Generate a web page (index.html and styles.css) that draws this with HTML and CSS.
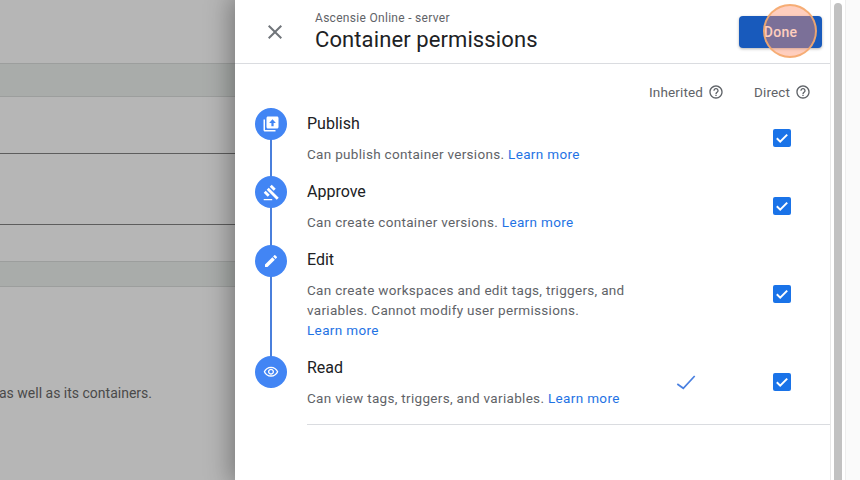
FILE: index.html
```html
<!DOCTYPE html>
<html lang="en">
<head>
<meta charset="utf-8">
<title>Container permissions</title>
<link rel="stylesheet" href="styles.css">
</head>
<body>
<div class="backdrop">
  <div class="bg-row r1"></div>
  <div class="bg-row band r2"></div>
  <div class="bg-row r3"></div>
  <div class="bg-row r4"></div>
  <div class="bg-row r5"></div>
  <div class="bg-row band r6"></div>
  <div class="bg-row r7"><span class="bg-text">as well as its containers.</span></div>
</div>
<section class="panel">
  <div class="main">
    <header class="head">
      <button class="close" aria-label="Close">
        <svg width="24" height="24" viewBox="0 0 24 24"><path d="M19 6.41 17.59 5 12 10.59 6.41 5 5 6.41 10.59 12 5 17.59 6.41 19 12 13.41 17.59 19 19 17.59 13.41 12z" fill="#70757a"/></svg>
      </button>
      <div class="titles">
        <div class="sub">Ascensie Online - server</div>
        <h1 class="title">Container permissions</h1>
      </div>
      <button class="done">Done</button>
    </header>
    <div class="cols">
      <span class="col col-i">Inherited
        <svg class="help" viewBox="0 0 24 24"><path fill="#5f6368" d="M11 18h2v-2h-2v2zm1-16C6.48 2 2 6.48 2 12s4.48 10 10 10 10-4.48 10-10S17.52 2 12 2zm0 18c-4.41 0-8-3.59-8-8s3.59-8 8-8 8 3.59 8 8-3.59 8-8 8zm0-14c-2.21 0-4 1.79-4 4h2c0-1.1.9-2 2-2s2 .9 2 2c0 2-3 1.75-3 5h2c0-2.25 3-2.5 3-5 0-2.21-1.79-4-4-4z"/></svg>
      </span>
      <span class="col col-d">Direct
        <svg class="help" viewBox="0 0 24 24"><path fill="#5f6368" d="M11 18h2v-2h-2v2zm1-16C6.48 2 2 6.48 2 12s4.48 10 10 10 10-4.48 10-10S17.52 2 12 2zm0 18c-4.41 0-8-3.59-8-8s3.59-8 8-8 8 3.59 8 8-3.59 8-8 8zm0-14c-2.21 0-4 1.79-4 4h2c0-1.1.9-2 2-2s2 .9 2 2c0 2-3 1.75-3 5h2c0-2.25 3-2.5 3-5 0-2.21-1.79-4-4-4z"/></svg>
      </span>
    </div>
    <div class="perm p-publish">
      <div class="rail"><span class="dot"><svg width="18" height="18" viewBox="0 0 24 24"><path fill="#fff" d="M4 6H2v14c0 1.1.9 2 2 2h14v-2H4V6zm16-4H8c-1.100 0-2 .9-2 2v12c0 1.100.9 2 2 2h12c1.100 0 2-.9 2-2V4c0-1.100-.9-2-2-2zm-4.500 13h-3v-4.500H9.500L14 5.500l4.500 5h-3z"/></svg></span></div>
      <div class="txt"><div class="name">Publish</div><p class="desc">Can publish container versions. <a class="lnk">Learn more</a></p></div>
      <div class="inh"></div>
      <div class="chk"><svg width="18" height="18" viewBox="0 0 18 18"><rect width="18" height="18" rx="2" fill="#1a73e8"/><path d="M3.800 9.300l3.400 3.300 7-7" fill="none" stroke="#fff" stroke-width="2"/></svg></div>
    </div>
    <div class="perm p-approve">
      <div class="rail"><span class="dot"><svg width="17" height="17" viewBox="0 0 24 24"><path fill="#fff" d="M1 21h12v2H1v-2zM5.245 8.070l2.830-2.827 14.140 14.142-2.828 2.828L5.245 8.070zM12.317 1l5.657 5.656-2.830 2.830-5.654-5.660L12.317 1zM3.825 9.485l5.657 5.657-2.828 2.828-5.657-5.657 2.828-2.828z"/></svg></span></div>
      <div class="txt"><div class="name">Approve</div><p class="desc">Can create container versions. <a class="lnk">Learn more</a></p></div>
      <div class="inh"></div>
      <div class="chk"><svg width="18" height="18" viewBox="0 0 18 18"><rect width="18" height="18" rx="2" fill="#1a73e8"/><path d="M3.800 9.300l3.400 3.300 7-7" fill="none" stroke="#fff" stroke-width="2"/></svg></div>
    </div>
    <div class="perm p-edit">
      <div class="rail"><span class="dot"><svg width="16" height="16" viewBox="0 0 24 24"><path fill="#fff" d="M3 17.250V21h3.750L17.810 9.940l-3.750-3.750L3 17.250zM20.710 7.040a1 1 0 0 0 0-1.410l-2.340-2.340a1 1 0 0 0-1.410 0l-1.830 1.830 3.750 3.750 1.830-1.830z"/></svg></span></div>
      <div class="txt"><div class="name">Edit</div><p class="desc wide">Can create workspaces and edit tags, triggers, and variables. Cannot modify user permissions. <a class="lnk">Learn more</a></p></div>
      <div class="inh"></div>
      <div class="chk"><svg width="18" height="18" viewBox="0 0 18 18"><rect width="18" height="18" rx="2" fill="#1a73e8"/><path d="M3.800 9.300l3.400 3.300 7-7" fill="none" stroke="#fff" stroke-width="2"/></svg></div>
    </div>
    <div class="perm p-read">
      <div class="rail"><span class="dot"><svg width="16" height="16" viewBox="0 0 24 24"><path fill="#fff" d="M12 6c3.790 0 7.170 2.130 8.820 5.500C19.170 14.870 15.790 17 12 17s-7.170-2.130-8.820-5.500C4.830 8.130 8.210 6 12 6m0-2C7 4 2.730 7.110 1 11.500 2.730 15.890 7 19 12 19s9.270-3.110 11-7.500C21.270 7.110 17 4 12 4zm0 5c1.380 0 2.500 1.120 2.500 2.500S13.380 14 12 14s-2.500-1.120-2.500-2.500S10.620 9 12 9m0-2c-2.480 0-4.500 2.020-4.500 4.500S9.520 16 12 16s4.500-2.020 4.500-4.500S14.480 7 12 7z"/></svg></span></div>
      <div class="txt"><div class="name">Read</div><p class="desc">Can view tags, triggers, and variables. <a class="lnk">Learn more</a></p></div>
      <div class="inh"><svg width="22" height="20" viewBox="0 0 22 20"><path d="M2.300 12l6 4.300L19.700 4" fill="none" stroke="#4a80e0" stroke-width="1.700"/></svg></div>
      <div class="chk"><svg width="18" height="18" viewBox="0 0 18 18"><rect width="18" height="18" rx="2" fill="#1a73e8"/><path d="M3.800 9.300l3.400 3.300 7-7" fill="none" stroke="#fff" stroke-width="2"/></svg></div>
    </div>
    <div class="rule"></div>
  </div>
  <div class="scroll"><div class="thumb"></div></div>
  <div class="edge"></div>
</section>
<div class="spot"></div>
</body>
</html>
```

FILE: styles.css
```css
* { box-sizing: border-box; }
html, body { margin: 0; height: 100%; }
body {
  width: 860px; height: 480px; overflow: hidden; display: flex;
  font-family: Roboto, "Liberation Sans", sans-serif; background: #fff; position: relative;
}
.backdrop { width: 235px; flex: none; display: flex; flex-direction: column; background: #b6b6b6; }
.bg-row { flex: none; border-bottom: 1px solid #9c9e9d; }
.band { background: #a9acaa; }
.r1 { height: 64px; }
.r2 { height: 33px; }
.r3 { height: 57px; border-bottom: 1px solid #5d5d5d; }
.r4 { height: 71px; border-bottom: 1px solid #5d5d5d; }
.r5 { height: 37px; }
.r6 { height: 25px; }
.r7 { flex: 1; border: 0; padding-top: 98px; }
.bg-text { display: block; margin-left: -1px; font-size: 14px; line-height: 16px; color: #4a4a4a; white-space: nowrap; }
.panel {
  flex: 1; display: flex; background: #fff; position: relative;
  box-shadow: 0 0 24px 4px rgba(0,0,0,.35);
}
.main { width: 595px; flex: none; }
.head { height: 64px; display: flex; align-items: flex-start; border-bottom: 1px solid #dadce0; }
.close { width: 24px; height: 24px; margin: 20px 0 0 28px; padding: 0; border: 0; background: none; }
.titles { margin-left: 28px; width: 424px; padding-top: 11px; }
.sub { font-size: 12px; line-height: 14px; color: #5f6368; letter-spacing: .3px; }
.title { margin: 1px 0 0; font-size: 22px; line-height: 28px; font-weight: 400; color: #202124; letter-spacing: .1px; }
.done {
  width: 83px; height: 32px; margin-top: 16px; border: 0; border-radius: 4px;
  background: #185abc; color: #fff; font: 500 14px Roboto, sans-serif; letter-spacing: .25px;
  box-shadow: 0 1px 3px rgba(0,0,0,.3);
}
.cols { height: 43px; padding-top: 19px; display: flex; font-size: 13.5px; line-height: 18px; color: #5f6368; letter-spacing: .15px; }
.col { display: flex; align-items: center; gap: 5px; height: 18px; }
.col-i { margin-left: 414px; width: 105px; }
.help { width: 16px; height: 16px; }
.perm { display: flex; align-items: flex-start; }
.p-publish, .p-approve { height: 68px; }
.p-edit { height: 108px; }
.p-read { height: 73px; }
.rail {
  width: 32px; flex: none; margin: 0 20px; align-self: stretch;
  background: linear-gradient(#4a7fdc, #4a7fdc) center / 2px 100% no-repeat;
}
.dot { width: 32px; height: 32px; border-radius: 50%; background: #4285f4; display: flex; align-items: center; justify-content: center; }
.p-publish .rail { margin-top: 1px; }
.p-approve .rail { padding-top: 1px; }
.p-edit .rail { padding-top: 2px; }
.p-read .rail { padding-top: 5px; align-self: flex-start; height: 37px; }
.txt { width: 360px; flex: none; }
.name { font-size: 16px; line-height: 20px; color: #202124; padding-top: 7px; }
.desc { margin: 0; padding-top: 10px; font-size: 13.5px; line-height: 20px; color: #5f6368; letter-spacing: .31px; }
.wide { width: 330px; }
.wide .lnk { display: block; }
.lnk { color: #1f73e4; letter-spacing: .35px; }
.inh { width: 106px; flex: none; padding: 21px 0 0 8px; line-height: 0; }
.chk { padding-top: 22px; line-height: 0; }
.p-edit .chk { padding-top: 42px; }
.rule { margin: 0 0 0 72px; height: 1px; background: #dadce0; }
.scroll { width: 16px; flex: none; border-left: 1px solid #e8e8e8; border-right: 1px solid #eeeeee; background: #fff; }
.thumb { width: 8px; height: 100%; margin: 3px 0 0 3px; background: #c1c1c1; border-radius: 4px 4px 0 0; }
.edge { flex: 1; background: #fafafa; }
.spot {
  position: absolute; left: 763px; top: 4px; width: 54px; height: 54px; border-radius: 50%;
  background: rgba(255,141,104,.43); border: 2px solid rgba(245,170,110,.9);
}
```
